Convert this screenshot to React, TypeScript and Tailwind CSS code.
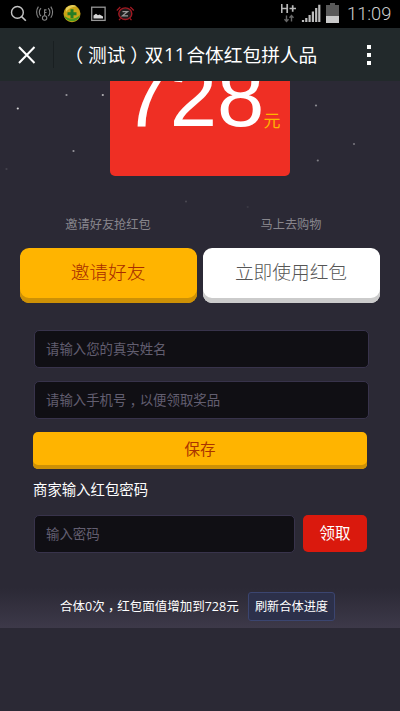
import React from "react";

interface FieldProps {
  className?: string;
  children: React.ReactNode;
}

// Faint stars behind the red packet: x, y, opacity
const STARS = [
  [17.8, 28, 0.8],
  [66.5, 14.5, 0.5],
  [102.8, 14.5, 0.65],
  [73.5, 70.5, 0.5],
  [6.5, 88.5, 0.12],
  [186, 121, 0.14],
  [316, 25, 0.45],
  [354, 63.5, 0.35],
  [317.8, 80, 0.4],
  [247.7, 126.5, 0.08],
];

// Centred comma, dropped down to the baseline
function Comma() {
  return (
    <span className="relative top-[0.38em] inline-block w-[1em] text-center leading-none font-['Noto_Sans_CJK_TC',sans-serif]">，</span>
  );
}

function StatusBar() {
  return (
    <div className="flex h-7 justify-between bg-black">
      <svg width="140" height="28" viewBox="0 0 140 28" fill="none">
        {/* Search */}
        <circle cx="17.4" cy="12.4" r="5.9" stroke="#c4c4c4" strokeWidth="1.4" />
        <path d="M21.6 16.6l4.2 4.2" stroke="#c4c4c4" strokeWidth="1.6" />
        {/* Hotspot key */}
        <g stroke="#858585" strokeWidth="1.1">
          <path d="M41 8.2a5.600 5.600 0 0 0 0 8M48.200 8.200a5.600 5.600 0 0 1 0 8" />
          <path d="M38.400 6.600c-2.200 3.400-2.200 7.800 0 11.200M50.800 6.600c2.200 3.400 2.200 7.800 0 11.200" />
          <circle cx="44.6" cy="18" r="2.2" />
          <path d="M44.600 15.800V9.300M44.600 9.900h1.900M44.600 12.500h1.900" />
        </g>
        {/* Security ball */}
        <circle cx="72" cy="13.7" r="8.5" fill="#c9a516" />
        <path d="M64 15.5c4 4 11 4.500 16.200-.500a8.500 8.500 0 0 1-16.200.500z" fill="#4a9a20" />
        <path d="M66 8a8.500 8.500 0 0 1 11-1.500C73 6.500 69 8 66 12z" fill="#e6cd5b" />
        <path d="M72 9.200v9M67.500 13.700h9" stroke="#247c24" strokeWidth="3" />
        {/* Gallery */}
        <rect x="91.7" y="7.2" width="13.4" height="13.2" stroke="#969696" strokeWidth="1.3" />
        <path d="M93.5 18.5v-3l2.500-1.800 2 1.500 1.500-.700 3.500 2v2z" fill="#d8d8d8" />
        {/* Sleeping alarm */}
        <ellipse cx="125.3" cy="13.7" rx="6.5" ry="5.8" fill="#1d1d1d" stroke="#a01922" strokeWidth="1.4" />
        <path d="M116.800 10.500l3.500-3.500M133.800 10.500l-3.500-3.500M120.500 18.500l-1.500 1.700M130 18.500l1.500 1.700" stroke="#a01922" strokeWidth="1.2" />
        <path d="M122.500 11.700h5l-5 4.100h5.500" stroke="#999" strokeWidth="1.3" />
      </svg>
      <div className="flex items-center">
        <svg width="62" height="28" viewBox="0 0 62 28" fill="none">
          {/* Network type */}
          <path d="M.700 4v9M6.200 4v9M.700 8.500h5.500M8.500 8.500h6.500M11.700 5.300v6.400" stroke="#b8b8b8" strokeWidth="1.7" />
          <path d="M5.500 15.500v6M3.500 19.300l2 2.200 2-2.200M10.500 21.500v-6M8.500 17.700l2-2.200 2 2.200" stroke="#666" strokeWidth="1.4" />
          {/* Signal */}
          <path d="M22 22v-2M25.300 22v-4M28.600 22v-7M31.900 22V11.500M35.200 22V8M38.300 22V4.800" stroke="#bdbdbd" strokeWidth="2.2" />
          {/* Battery */}
          <path d="M45 5h4V3h5v2h4v18H45z" fill="#595959" />
          <path d="M45 16h13v7H45z" fill="#c9c9c9" />
        </svg>
        <span className="w-[57px] pl-1 font-['Roboto',sans-serif] text-[18.300px] leading-7 font-light whitespace-nowrap text-[#d0d0d0]">
          11:09
        </span>
      </div>
    </div>
  );
}

function TitleBar() {
  return (
    <div className="flex h-[53px] items-center bg-[#22292b] text-white">
      <div className="flex h-[27px] w-[54px] items-center border-r border-[#191f21] pl-[18px]">
        <svg width="18" height="18" viewBox="0 0 18 18" stroke="#fff" strokeWidth="2">
          <path d="M1 1l15.5 16M16.5 1L1 17" />
        </svg>
      </div>
      <h1 className="flex flex-1 pb-[2px] pl-[15px] text-[18.700px] leading-[51px] whitespace-nowrap">
        <span className="w-[19px] text-center [font-feature-settings:'halt']">（</span>
        <span>测试</span>
        <span className="w-[19px] text-center [font-feature-settings:'halt']">）</span>
        <span>双</span>
        <span className="px-[1px] font-['Open_Sans',sans-serif]">11</span>
        <span>合体红包拼人品</span>
      </h1>
      <div className="mr-[29px] flex flex-col gap-1">
        <span className="size-1 bg-white" />
        <span className="size-1 bg-white" />
        <span className="size-1 bg-white" />
      </div>
    </div>
  );
}

function Field({ className = "", children }: FieldProps) {
  return (
    <div className={`ml-px h-[38px] rounded-[5px] border border-[#38334b] bg-[#100f14] pl-[11px] text-[13.400px] leading-[34px] whitespace-nowrap text-[#625e70] ${className}`}>
      {children}
    </div>
  );
}

export default function App() {
  return (
    <div className="h-[711px] w-[400px] overflow-hidden bg-[#2b2935] font-['Noto_Sans_CJK_SC',sans-serif]">
      <StatusBar />
      <TitleBar />

      {/* Red packet */}
      <div className="relative h-[135px]">
        <svg className="absolute inset-0" width="400" height="135">
          {STARS.map(([x, y, opacity]) => (
            <circle key={x} cx={x} cy={y - 0.5} r="1.1" fill="#fff" opacity={opacity} />
          ))}
        </svg>
        <div className="relative mx-auto flex h-[94.500px] w-[180px] items-end overflow-hidden rounded-b-[5px] bg-[#ef2f24] pb-[36.500px] pl-[12.500px]">
          <span className="w-[141px] font-['Liberation_Sans',sans-serif] text-[85px] leading-[84px] text-white">728</span>
          <span className="pb-[11px] text-[17px] leading-none text-[#ffb400]">元</span>
        </div>
      </div>

      {/* Actions */}
      <div className="grid grid-cols-[177px_177px] gap-x-[6px] pl-5 text-center">
        <p className="h-8 pr-px text-[12.200px] leading-4 text-[#88868d]">邀请好友抢红包</p>
        <p className="h-8 pr-px text-[12.200px] leading-4 text-[#88868d]">马上去购物</p>
        <button className="h-[55px] rounded-[9px] bg-[#ffb400] pr-px pb-2 text-[18.700px] font-light text-[#a82c00] shadow-[inset_0_-5px_0_#cd9106]">
          邀请好友
        </button>
        <button className="h-[55px] rounded-[9px] bg-white pr-px pb-2 text-[18.700px] font-light text-[#555] shadow-[inset_0_-5px_0_#cbcbcb]">
          立即使用红包
        </button>
      </div>

      {/* Contact form */}
      <div className="mt-[27px] pl-[33px]">
        <Field className="w-[335px]">请输入您的真实姓名</Field>
        <Field className="mt-[13px] w-[335px]">
          请输入手机号<Comma />以便领取奖品
        </Field>
        <button className="mt-[13px] block h-[37px] w-[334px] rounded-[5px] bg-[#ffb400] pb-1 text-[15.500px] text-[#aa3300] shadow-[inset_0_-4px_0_#cd9106]">
          保存
        </button>
        <p className="mt-[9px] h-[37px] text-[14.400px] leading-[22px] text-white">商家输入红包密码</p>
        <div className="flex gap-2">
          <Field className="w-[261px]">输入密码</Field>
          <button className="h-[37px] w-16 rounded-[5px] bg-[#da190d] pb-[2px] text-[15.500px] text-white">领取</button>
        </div>
      </div>

      {/* Progress */}
      <div className="mt-[35px] flex h-10 items-center bg-linear-to-b from-[#2b2935] to-[#3d3949] pb-[3px] pl-[60px] text-[12.200px] text-white">
        <span className="w-[188px] text-[12.500px] whitespace-nowrap">
          合体<span className="font-['Open_Sans',sans-serif]">0</span>次<Comma />红包面值增加到
          <span className="font-['Open_Sans',sans-serif]">728</span>元
        </span>
        <button className="h-[29px] w-[87px] rounded-[3px] border border-[#3b4570] bg-[#2c304a] whitespace-nowrap">
          刷新合体进度
        </button>
      </div>
    </div>
  );
}
